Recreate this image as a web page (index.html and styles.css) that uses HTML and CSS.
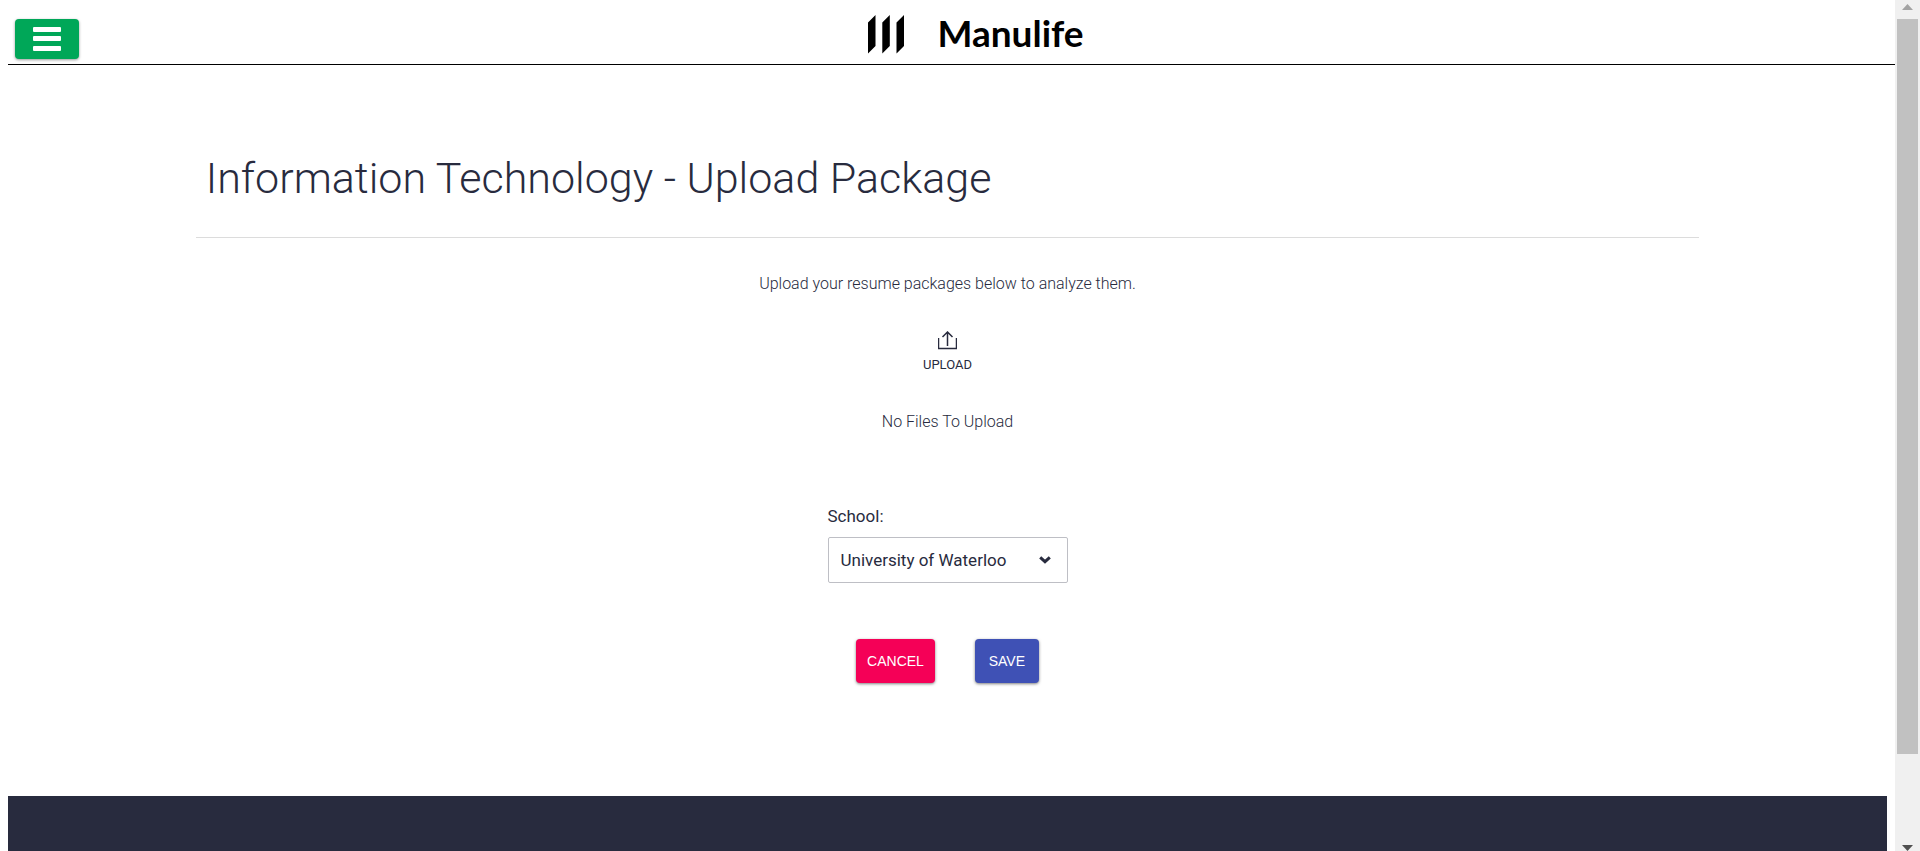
FILE: index.html
```html
<!DOCTYPE html>
<html lang="en">
<head>
  <meta charset="utf-8">
  <meta name="viewport" content="width=device-width, initial-scale=1">
  <title>Information Technology - Upload Package</title>
  <link rel="stylesheet" href="styles.css">
</head>
<body>
  <div class="page">
    <header class="topbar">
      <button class="menu-button" type="button" aria-label="Menu">
        <svg width="28" height="24" viewBox="0 0 28 24" aria-hidden="true">
          <rect y="0" width="28" height="5" rx="1"/>
          <rect y="9" width="28" height="5" rx="1"/>
          <rect y="19" width="28" height="5" rx="1"/>
        </svg>
      </button>
      <div class="brand">
        <svg class="brand-mark" width="36" height="39" viewBox="0 0 36 39" aria-hidden="true">
          <path d="M0 7.5 7.5 0v31L0 38.5zM14.3 7.5 21.8 0v31l-7.500 7.500zM28.500 7.500 36 0v31l-7.500 7.500z"/>
        </svg>
        <span class="brand-name">Manulife</span>
      </div>
    </header>

    <main class="content">
      <h1 class="title">Information Technology - Upload Package</h1>
      <form class="form">
        <p class="text">Upload your resume packages below to analyze them.</p>
        <button class="upload" type="button">
          <svg width="19" height="19" viewBox="0 0 19 19" aria-hidden="true">
            <path d="M.5 7v10.500h18V7M9.500 15V1.500M4.500 6l5-5 5 5"/>
          </svg>
          <span>UPLOAD</span>
        </button>
        <p class="text">No Files To Upload</p>
        <div class="field">
          <label class="label" for="school">School:</label>
          <div class="select-wrap">
            <select class="select" id="school">
              <option>University of Waterloo</option>
            </select>
            <svg class="chevron" width="12" height="8" viewBox="0 0 12 8" aria-hidden="true">
              <path d="M1.200 1.400 6 5.700l4.800-4.300"/>
            </svg>
          </div>
        </div>
        <div class="actions">
          <button class="button cancel" type="button">CANCEL</button>
          <button class="button save" type="button">SAVE</button>
        </div>
      </form>
    </main>

    <footer class="footer"></footer>
  </div>

  <div class="scrollbar" aria-hidden="true">
    <svg class="arrow-up" width="11" height="6" viewBox="0 0 11 6"><path d="M5.500 0 11 6H0z"/></svg>
    <div class="track"><div class="thumb"></div></div>
    <svg class="arrow-down" width="11" height="6" viewBox="0 0 11 6"><path d="M0 0h11L5.500 6z"/></svg>
  </div>
</body>
</html>
```
FILE: styles.css
```css
* {
  box-sizing: border-box;
}

body {
  display: flex;
  height: 100vh;
  margin: 0;
  overflow: hidden;
  background: #fff;
  color: #282b3e;
  font-family: Roboto, "Liberation Sans", sans-serif;
}

.page {
  display: flex;
  flex: 1;
  flex-direction: column;
  min-width: 0;
  padding-left: 8px;
}

.topbar {
  display: grid;
  grid-template-columns: 1fr auto 1fr;
  height: 65px;
  padding-left: 7px;
  border-bottom: 1px solid #000;
}

.menu-button {
  display: flex;
  align-items: center;
  justify-content: center;
  width: 64px;
  height: 40px;
  margin-top: 19px;
  padding: 0 0 1px;
  border: 0;
  border-radius: 4px;
  background: #00a758;
  box-shadow: 0 1px 3px rgba(0, 0, 0, 0.4);
  fill: #fff;
}

.brand {
  display: flex;
  gap: 33px;
  padding: 15px 0 0 42px;
}

.brand-name {
  color: #000;
  font-family: Lato, sans-serif;
  font-size: 37px;
  font-weight: 700;
  line-height: 36px;
}

.content {
  display: flex;
  flex: 1;
  flex-direction: column;
  width: 80%;
  margin: 0 auto;
  padding: 78px 8px 0 0;
}

.title {
  margin: 0 -1px;
  padding: 0 10px 23px;
  border-bottom: 1px solid #dcdcdc;
  font-size: 43px;
  font-weight: 300;
  line-height: 71px;
}

.form {
  display: flex;
  flex-direction: column;
  align-items: center;
}

.text {
  margin: 0;
  padding-top: 34px;
  font-size: 16px;
  font-weight: 300;
  line-height: 24px;
}

.upload {
  display: flex;
  flex-direction: column;
  align-items: center;
  gap: 7px;
  margin: 35px 0 3px;
  padding: 0;
  border: 0;
  background: none;
  color: #282b3e;
  font: 13px/16px Roboto, sans-serif;
}

.upload svg {
  fill: none;
  stroke: #282b3e;
  stroke-width: 1.5;
}

.field {
  width: 240px;
  margin-top: 70px;
}

.label {
  display: block;
  margin-bottom: 9px;
  font-size: 17px;
  line-height: 24px;
}

.select-wrap {
  position: relative;
}

.select {
  width: 100%;
  height: 46px;
  padding: 0 40px 0 12px;
  border: 1px solid #bebfc5;
  border-radius: 2px;
  appearance: none;
  background: #fff;
  color: #282b3e;
  font: 17px/24px Roboto, sans-serif;
}

.chevron {
  position: absolute;
  top: 19px;
  right: 17px;
  fill: none;
  stroke: #282b3e;
  stroke-width: 3;
  pointer-events: none;
}

.actions {
  display: flex;
  gap: 40px;
  margin-top: 56px;
}

.button {
  min-width: 64px;
  height: 44px;
  padding: 0 11px;
  border: 0;
  border-radius: 4px;
  box-shadow: 0 1px 3px rgba(0, 0, 0, 0.5);
  color: #fff;
  font: 14px/24px "Liberation Sans", sans-serif;
}

.cancel {
  background: #f50057;
}

.save {
  background: #3f51b5;
}

.footer {
  height: 55px;
  margin-right: 8px;
  background: #282b3e;
}

.scrollbar {
  display: flex;
  flex-direction: column;
  align-items: center;
  width: 25px;
  padding: 4px 2px 0;
  background: #f0f0f0;
}

.arrow-up {
  fill: #a3a3a3;
}

.arrow-down {
  fill: #505050;
}

.track {
  flex: 1;
  width: 21px;
  padding: 9px 0;
}

.thumb {
  height: 90%;
  background: #c1c1c1;
}
```
